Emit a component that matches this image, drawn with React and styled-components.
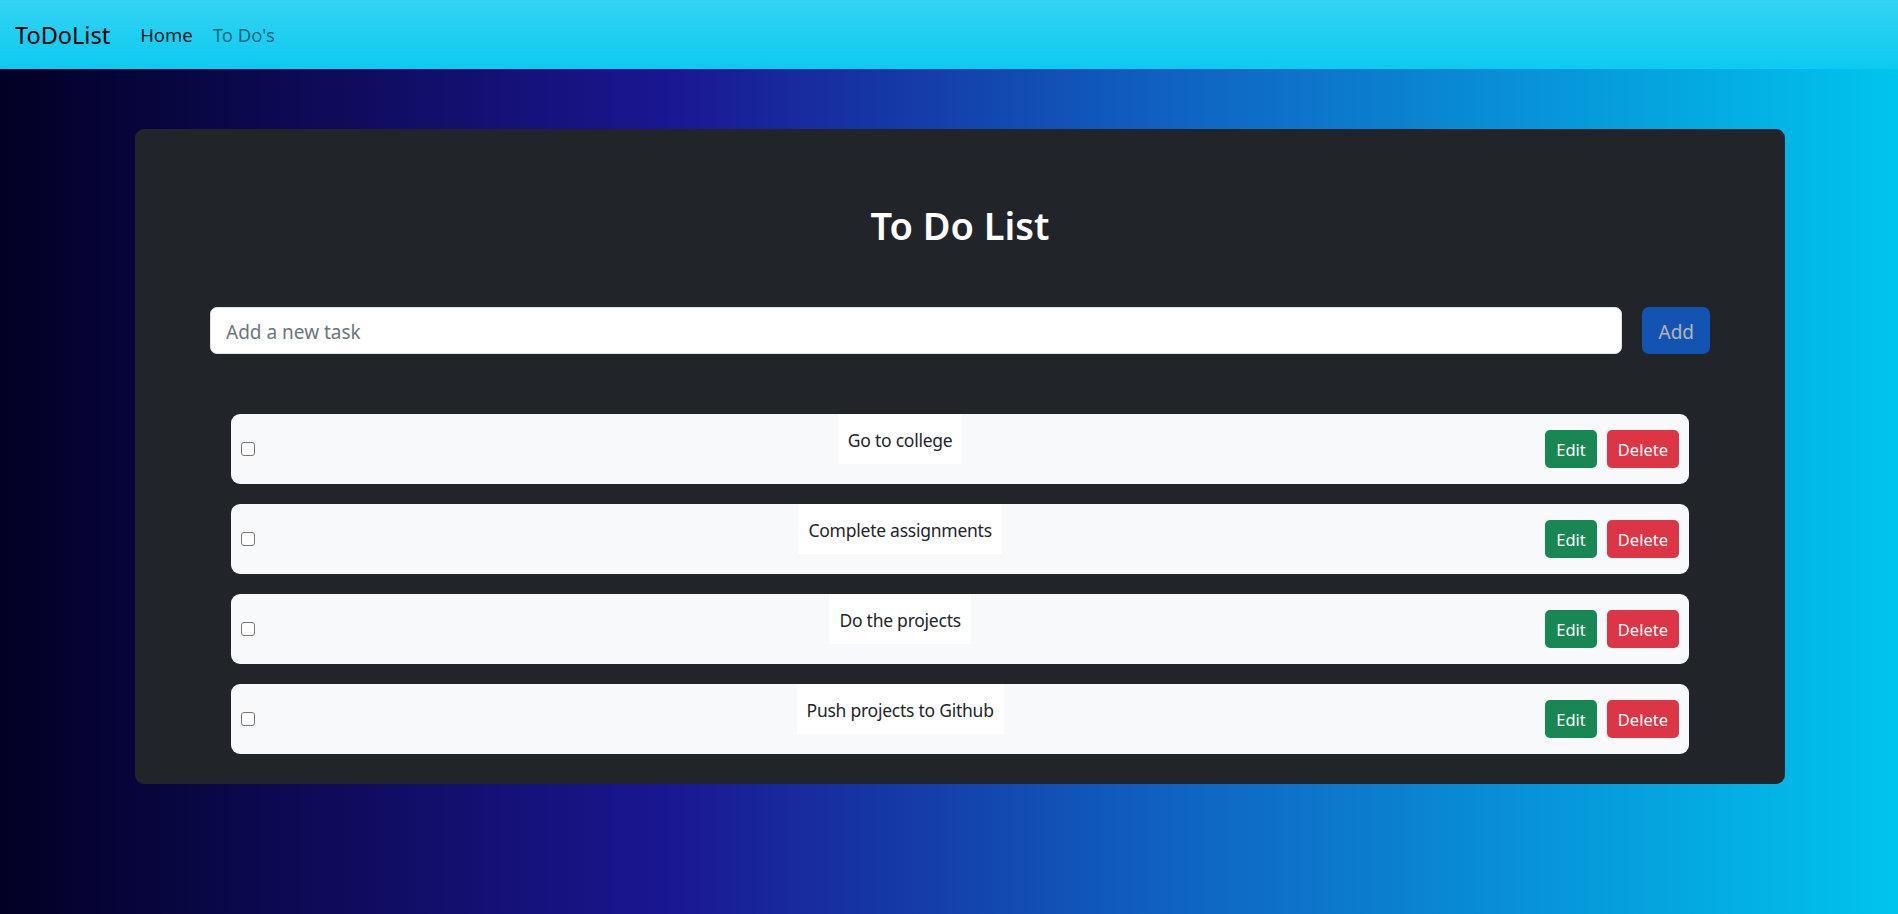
import React from "react";
import styled, { createGlobalStyle } from "styled-components";

const GlobalStyle = createGlobalStyle`
  html, body {
    margin: 0;
    padding: 0;
  }
  body {
    font-family: "Noto Sans", "Open Sans", Arial, sans-serif;
    color: #212529;
    -webkit-font-smoothing: antialiased;
  }
  * { box-sizing: border-box; }
`;

const Page = styled.div`
  min-height: 100vh;
  background: linear-gradient(90deg, #020024 0%, #1a1691 35%, #0f63c2 62%, #00c4ee 100%);
`;

const Navbar = styled.nav`
  height: 69px;
  display: flex;
  align-items: center;
  padding: 0 15px;
  background: linear-gradient(180deg, #33d3f2 0%, #0dcaf0 100%);
`;

const Brand = styled.a`
  font-size: 23.5px;
  color: #000;
  margin-right: 20px;
  text-decoration: none;
`;

const NavLink = styled.a`
  font-size: 18.5px;
  padding: 0 10px;
  text-decoration: none;
  color: ${(p) => (p.$active ? "rgba(0,0,0,0.9)" : "rgba(0,0,0,0.55)")};
`;

const Card = styled.main`
  width: 1650px;
  margin: 60px 0 0 135px;
  background: #212529;
  border-radius: 9px;
  padding: 72px 75px 30px;
`;

const Title = styled.h2`
  margin: 0 0 58px;
  text-align: center;
  color: #fff;
  font-size: 38px;
  line-height: 48px;
  font-weight: 600;
`;

const AddRow = styled.div`
  display: flex;
  align-items: center;
  gap: 20px;
  margin-bottom: 60px;
`;

const TaskInput = styled.input`
  flex: 1;
  height: 47px;
  border: 1px solid #dee2e6;
  border-radius: 7px;
  padding: 3px 15px 0;
  font-family: inherit;
  font-size: 19px;
  color: #212529;
  background: #fff;
  outline: none;
  &::placeholder {
    color: #6c757d;
  }
`;

const Button = styled.button`
  font-family: inherit;
  border: 1px solid transparent;
  color: #fff;
  cursor: pointer;
  white-space: nowrap;
  background: ${(p) => p.$bg};
  border-radius: ${(p) => (p.$large ? "7px" : "5px")};
  height: ${(p) => (p.$large ? "47px" : "38px")};
  padding: ${(p) => (p.$large ? "2px 15px 0" : "0 10px")};
  font-size: ${(p) => (p.$large ? "19px" : "16.5px")};
  &:disabled {
    opacity: 0.65;
    cursor: default;
  }
`;

const List = styled.ul`
  list-style: none;
  margin: 0 21px;
  padding: 0;
  display: flex;
  flex-direction: column;
  gap: 20px;
`;

const Row = styled.li`
  display: flex;
  align-items: center;
  justify-content: space-between;
  background: #f8f9fa;
  border-radius: 9px;
  padding: 0 10px;
`;

const Check = styled.input.attrs({ type: "checkbox" })`
  appearance: none;
  -webkit-appearance: none;
  width: 14px;
  height: 14px;
  margin: 0;
  border: 1px solid #767676;
  border-radius: 3px;
  background: #fff;
`;

const TaskText = styled.p`
  margin: 0 0 20px;
  padding: 11px 10px 9px;
  background: #fff;
  font-size: 17.5px;
  letter-spacing: -0.25px;
  line-height: 30px;
  color: #212529;
`;

const Actions = styled.div`
  display: flex;
  gap: 10px;
`;

const tasks = [
  "Go to college",
  "Complete assignments",
  "Do the projects",
  "Push projects to Github",
];

export default function App() {
  return (
    <>
      <GlobalStyle />
      <Page>
        <Navbar>
          <Brand href="#">ToDoList</Brand>
          <NavLink href="#" $active>Home</NavLink>
          <NavLink href="#">To Do's</NavLink>
        </Navbar>
        <Card>
          <Title>To Do List</Title>
          <AddRow>
            <TaskInput placeholder="Add a new task" />
            <Button $large $bg="#0d6efd" disabled>Add</Button>
          </AddRow>
          <List>
            {tasks.map((t) => (
              <Row key={t}>
                <Check />
                <TaskText>{t}</TaskText>
                <Actions>
                  <Button $bg="#198754">Edit</Button>
                  <Button $bg="#dc3545">Delete</Button>
                </Actions>
              </Row>
            ))}
          </List>
        </Card>
      </Page>
    </>
  );
}
